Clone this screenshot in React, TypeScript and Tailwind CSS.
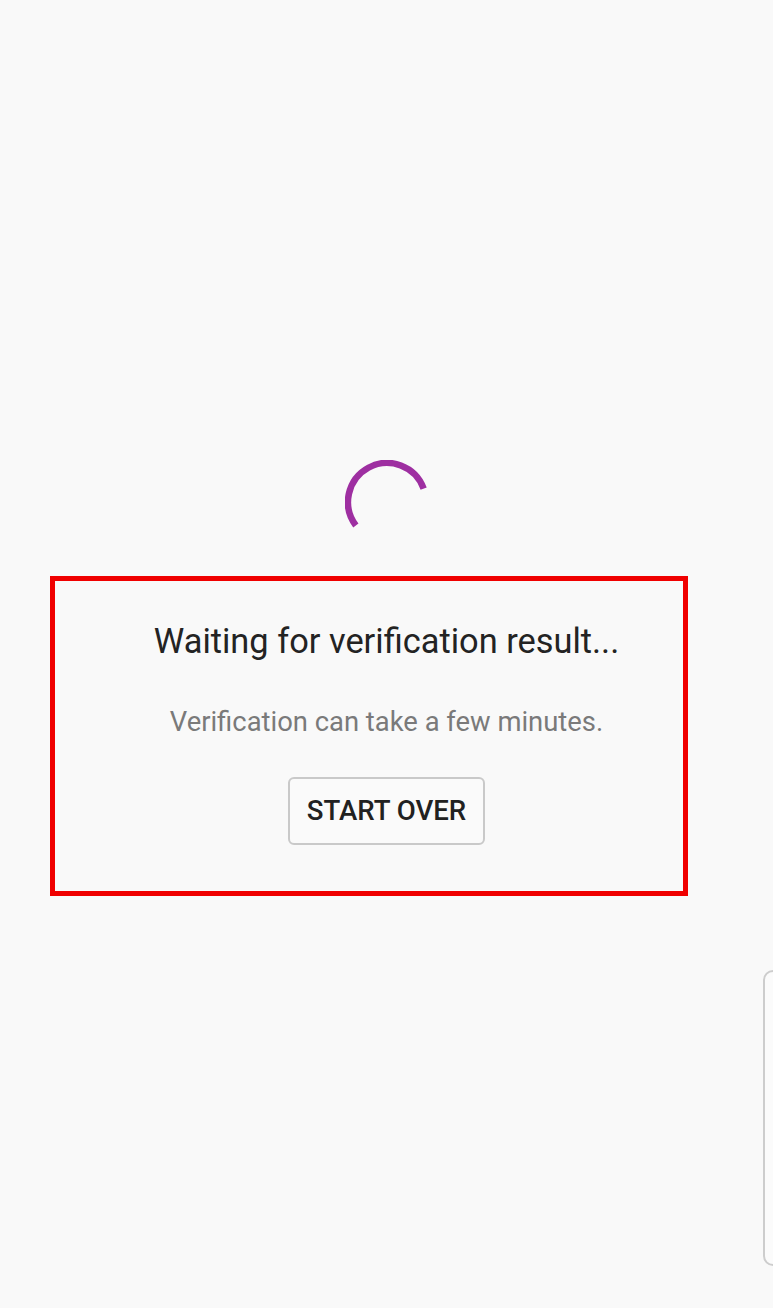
import React from "react";

export default function App() {
  return (
    <div className="relative h-[1308px] w-[773px] overflow-hidden bg-[#f9f9f9] font-['Roboto',sans-serif]">
      <div className="flex flex-col items-center pt-[460px]">
        <svg width="84" height="84" viewBox="0 0 84 84" className="block">
          <path
            d="M 10.85 65.47 A 39 39 0 1 1 78.65 28.66"
            fill="none"
            stroke="#9e2fa1"
            strokeWidth="6.5"
          />
        </svg>
        <h1 className="mt-[77px] text-[34.4px] leading-[40px] font-normal text-[#232323]">
          Waiting for verification result...
        </h1>
        <p className="mt-[45px] text-[27.4px] leading-[32px] text-[#7a7a7a]">
          Verification can take a few minutes.
        </p>
        <button className="mt-[39px] h-[68px] w-[197px] rounded-[6px] border-2 border-[#c9c9c9] bg-[#fafafa] text-[27.6px] font-medium text-[#212121]">
          START OVER
        </button>
      </div>

      <div className="absolute left-[50px] top-[576px] h-[320px] w-[638px] border-[5px] border-[#f00000]" />

      <div className="absolute left-[763px] top-[970px] h-[296px] w-[40px] rounded-[10px] border-2 border-[#cdcdcd] bg-[#fbfbfb]" />
    </div>
  );
}
